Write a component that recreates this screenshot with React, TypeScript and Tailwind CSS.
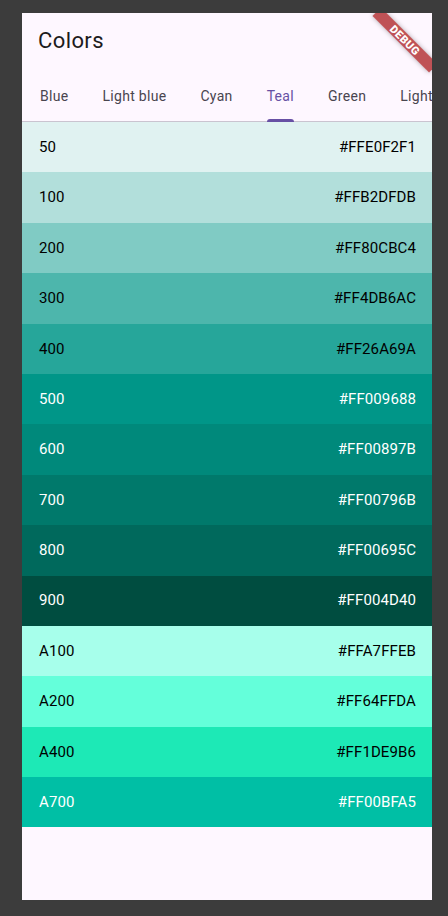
const tabs = ["Blue", "Light blue", "Cyan", "Teal", "Green", "Light green"];

const shades = [
  { name: "50", hex: "#E0F2F1", dark: false },
  { name: "100", hex: "#B2DFDB", dark: false },
  { name: "200", hex: "#80CBC4", dark: false },
  { name: "300", hex: "#4DB6AC", dark: false },
  { name: "400", hex: "#26A69A", dark: false },
  { name: "500", hex: "#009688", dark: true },
  { name: "600", hex: "#00897B", dark: true },
  { name: "700", hex: "#00796B", dark: true },
  { name: "800", hex: "#00695C", dark: true },
  { name: "900", hex: "#004D40", dark: true },
  { name: "A100", hex: "#A7FFEB", dark: false },
  { name: "A200", hex: "#64FFDA", dark: false },
  { name: "A400", hex: "#1DE9B6", dark: false },
  { name: "A700", hex: "#00BFA5", dark: true },
];

/* ── Flutter-style debug ribbon ── */
function DebugBanner() {
  return (
    <div className="absolute top-[21px] right-[-13px] z-20 flex h-[12px] w-[80px] rotate-45 items-center justify-center bg-[rgba(175,40,44,0.8)] shadow-[0_0_5px_rgba(0,0,0,0.3)]">
      <span className="text-[11px] font-black leading-none tracking-[0.4px] text-white">DEBUG</span>
    </div>
  );
}

export default function App() {
  const selected = "Teal";

  return (
    <div className="h-[916px] bg-[#3c3c3c] pt-[13px] pl-[22px] font-['Roboto','Noto_Sans',sans-serif]">
      <div className="relative flex h-[887px] w-[410px] flex-col overflow-hidden bg-[#fef7ff]">
        <DebugBanner />

        {/* App bar */}
        <div className="flex h-[56px] shrink-0 items-center px-4">
          <h1 className="text-[22px] font-normal leading-7 tracking-[0.4px] text-[#1d1b20]">Colors</h1>
        </div>

        {/* Tabs */}
        <div className="flex h-[53px] shrink-0 overflow-hidden whitespace-nowrap pl-px shadow-[inset_0_-1px_0_#cac4d0]">
          {tabs.map((t) => (
            <div key={t} className="relative flex shrink-0 items-center px-[17px]">
              <span
                className={
                  "text-sm font-normal tracking-[0.3px] " +
                  (t === selected ? "text-[#6750a4]" : "text-[#49454f]")
                }
              >
                {t}
              </span>
              {t === selected && (
                <div className="absolute bottom-0 left-[17px] right-[17px] h-[3px] rounded-t-[3px] bg-[#6750a4]" />
              )}
            </div>
          ))}
        </div>

        {/* Shade list */}
        <div className="flex flex-col">
          {shades.map((s) => (
            <div
              key={s.name}
              className={
                "flex h-[50.4px] items-center justify-between pl-[17px] pr-4 text-[15px] tracking-[0.1px] " +
                (s.dark ? "text-white" : "text-black")
              }
              style={{ backgroundColor: s.hex }}
            >
              <span>{s.name}</span>
              <span>#FF{s.hex.slice(1)}</span>
            </div>
          ))}
        </div>
      </div>
    </div>
  );
}
